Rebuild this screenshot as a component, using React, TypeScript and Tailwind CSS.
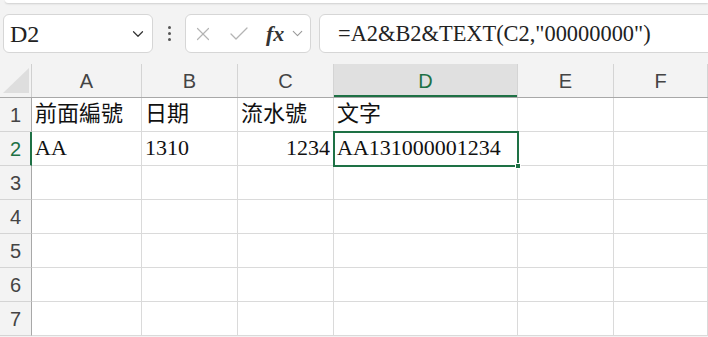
import { X, Check, ChevronDown } from "lucide-react";

const cols = [
  { key: "A", w: "w-[110px]" },
  { key: "B", w: "w-[96px]" },
  { key: "C", w: "w-[96px]" },
  { key: "D", w: "w-[184px]" },
  { key: "E", w: "w-[96px]" },
  { key: "F", w: "flex-1" },
];

const data: Record<number, Record<string, { v: string; right?: boolean }>> = {
  1: { A: { v: "前面編號" }, B: { v: "日期" }, C: { v: "流水號" }, D: { v: "文字" } },
  2: { A: { v: "AA" }, B: { v: "1310" }, C: { v: "1234", right: true }, D: { v: "AA131000001234" } },
};

const cellFont = "[font-family:'Liberation_Serif','Noto_Sans_CJK_TC',serif]";

function Toolbar() {
  return (
    <div className="mt-[11px] flex h-[39px] items-center">
      <div className="ml-[3px] flex h-full w-[150px] items-center justify-between rounded-[6px] border border-[#d6d6d6] bg-white pl-[6px] pr-[5px]">
        <span className={`text-[24px] text-[#222] ${cellFont}`}>D2</span>
        <ChevronDown size={18} strokeWidth={1.6} className="text-[#333]" />
      </div>
      <div className="flex w-[32px] flex-col items-center gap-[3px]">
        <span className="h-[3px] w-[3px] rounded-full bg-[#555]" />
        <span className="h-[3px] w-[3px] rounded-full bg-[#555]" />
        <span className="h-[3px] w-[3px] rounded-full bg-[#555]" />
      </div>
      <div className="flex h-full w-[126px] items-center rounded-[6px] border border-[#d6d6d6] bg-white pl-[6px]">
        <X size={22} strokeWidth={1.3} className="text-[#b4b4b4]" />
        <Check size={24} strokeWidth={1.3} className="ml-[13px] text-[#b4b4b4]" />
        <span className="ml-[15px] text-[22px] font-bold italic text-[#333] [font-family:'Liberation_Serif',serif]">fx</span>
        <ChevronDown size={17} strokeWidth={1.5} className="ml-[5px] text-[#999]" />
      </div>
      <div className="ml-[8px] -mr-[10px] flex h-full flex-1 items-center rounded-[6px] border border-[#d6d6d6] bg-white pl-[18px]">
        <span className={`text-[22.4px] text-[#222] ${cellFont}`}>=A2&amp;B2&amp;TEXT(C2,"00000000")</span>
      </div>
    </div>
  );
}

function Grid() {
  return (
    <div className="relative mt-[11px]">
      <div className="flex h-[34px] border-b border-[#a8a8a8]">
        <div className="relative w-[32px] border-r border-[#d0d0d0]">
          <svg width="27" height="26" viewBox="0 0 27 26" className="absolute left-[3px] top-[4px]">
            <polygon points="26,0 26,25 0,25" fill="#dedede" />
          </svg>
        </div>
        {cols.map((c) => (
          <div
            key={c.key}
            className={`${c.w} flex items-center justify-center border-r border-[#d4d4d4] text-[20px] [font-family:'Liberation_Sans',sans-serif] ${
              c.key === "D" ? "bg-[#e0e0e0] text-[#1e7145] shadow-[inset_0_-2px_0_#1e7145]" : "text-[#444]"
            }`}
          >
            {c.key}
          </div>
        ))}
      </div>
      {[1, 2, 3, 4, 5, 6, 7].map((r) => (
        <div key={r} className="flex h-[34px]">
          <div
            className={`flex w-[32px] items-center justify-center border-b border-r border-b-[#d4d4d4] text-[20px] [font-family:'Liberation_Sans',sans-serif] ${
              r === 2 ? "border-r-2 border-r-[#1e7145] pl-[1px] text-[#1e7145]" : "border-r-[#a8a8a8] text-[#444]"
            }`}
          >
            {r}
          </div>
          {cols.map((c) => {
            const cell = data[r]?.[c.key];
            return (
              <div
                key={c.key}
                className={`${c.w} flex items-end overflow-visible whitespace-nowrap border-b border-r border-[#dadada] bg-white px-[3px] pb-[3px] text-[22px] leading-[28px] text-[#111] ${cellFont} ${
                  cell?.right ? "justify-end" : ""
                }`}
              >
                {cell?.v}
              </div>
            );
          })}
        </div>
      ))}
      <div className="absolute left-[333px] top-[67px] h-[36px] w-[186px] border-2 border-[#1e7145]">
        <span className="absolute -bottom-[4px] -right-[4px] h-[6px] w-[6px] border border-white bg-[#1e7145]" />
      </div>
    </div>
  );
}

export default function App() {
  return (
    <div className="h-[337px] w-[708px] overflow-hidden bg-[#f3f3f3]">
      <div className="ml-[5px] h-[3px] rounded-bl-[6px] bg-white shadow-[0_1px_2px_rgba(0,0,0,0.15)]" />
      <Toolbar />
      <Grid />
    </div>
  );
}
